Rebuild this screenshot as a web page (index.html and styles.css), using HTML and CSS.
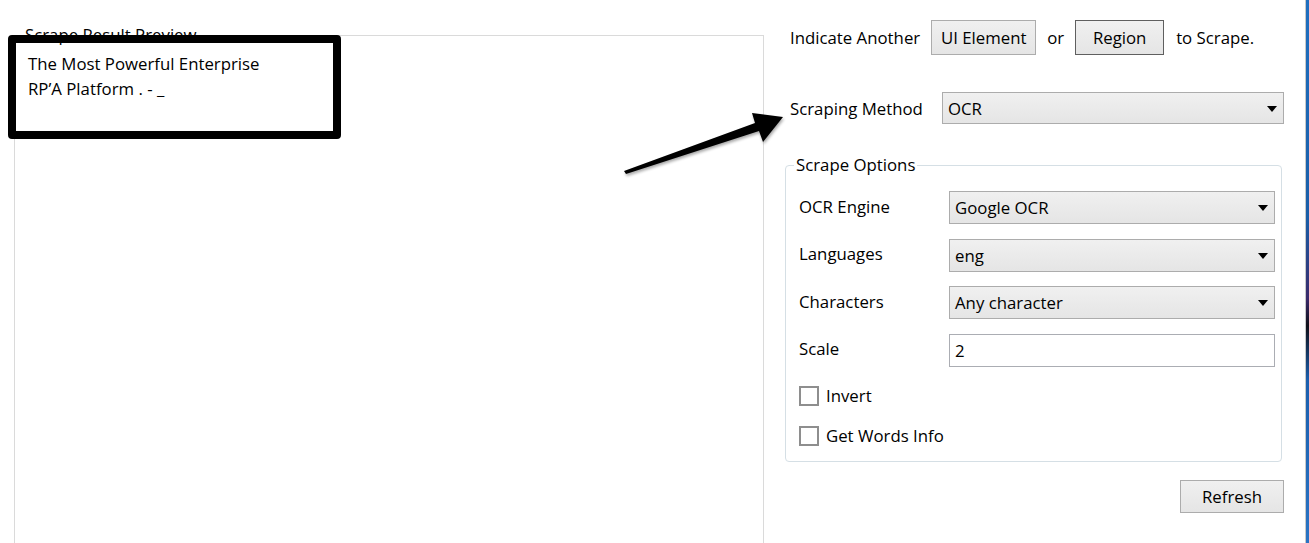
FILE: index.html
```html
<!DOCTYPE html>
<html lang="en">
<head>
<meta charset="utf-8">
<title>Scrape Wizard</title>
<link rel="stylesheet" href="styles.css">
</head>
<body>
<div class="window">
  <div class="left">
    <fieldset class="preview">
      <legend class="preview-legend">Scrape Result Preview</legend>
      <div class="preview-text">The Most Powerful Enterprise<br>RP’A Platform . - _</div>
    </fieldset>
  </div>
  <div class="right">
    <div class="indicate">
      <span class="txt">Indicate Another</span>
      <button class="btn btn-ui">UI Element</button>
      <span class="txt">or</span>
      <button class="btn btn-region">Region</button>
      <span class="txt">to Scrape.</span>
    </div>
    <div class="method-row">
      <span class="txt">Scraping Method</span>
      <div class="select select-method"><span>OCR</span><i class="caret"></i></div>
    </div>
    <fieldset class="options">
      <legend class="options-legend">Scrape Options</legend>
      <div class="opt-grid">
        <span class="lbl">OCR Engine</span>
        <div class="select"><span>Google OCR</span><i class="caret"></i></div>
        <span class="lbl">Languages</span>
        <div class="select"><span>eng</span><i class="caret"></i></div>
        <span class="lbl">Characters</span>
        <div class="select"><span>Any character</span><i class="caret"></i></div>
        <span class="lbl">Scale</span>
        <div class="input"><span>2</span></div>
      </div>
      <div class="checks">
        <label class="check"><span class="box"></span><span>Invert</span></label>
        <label class="check"><span class="box"></span><span>Get Words Info</span></label>
      </div>
    </fieldset>
    <div class="actions">
      <button class="btn btn-refresh">Refresh</button>
    </div>
  </div>
  <div class="edge"></div>

  <div class="highlight"></div>
  <svg class="arrow" viewBox="0 0 1309 543" width="1309" height="543" aria-hidden="true">
    <defs>
      <filter id="sh" x="-10%" y="-10%" width="120%" height="120%">
        <feGaussianBlur in="SourceAlpha" stdDeviation="1.5"/>
        <feOffset dx="1" dy="2" result="o"/>
        <feComponentTransfer><feFuncA type="linear" slope="0.35"/></feComponentTransfer>
        <feMerge><feMergeNode/><feMergeNode in="SourceGraphic"/></feMerge>
      </filter>
    </defs>
    <polygon filter="url(#sh)" fill="#000" points="624,171 755,123 752,113 783,117 763,142 759,131 626,174"/>
  </svg>
</div>
</body>
</html>
```
FILE: styles.css
```css
html, body {
  margin: 0;
  padding: 0;
  background: #ffffff;
}

.window {
  position: relative;
  width: 1309px;
  height: 543px;
  overflow: hidden;
  display: flex;
  background: #ffffff;
  font-family: "Open Sans", "Noto Sans", sans-serif;
  font-size: 16.8px;
  color: #000;
}

/* ---------- left: preview ---------- */
.left {
  width: 785px;
  flex: none;
}

.preview {
  box-sizing: border-box;
  margin: 25px 0 0 14px;
  width: 750px;
  height: 600px;
  padding: 6px 0 0 13px;
  border: 1px solid #dadada;
  border-bottom: none;
  min-width: 0;
}

.preview-legend {
  margin-left: -5px;
  padding: 0 2px;
  line-height: 20px;
}

.preview-text {
  line-height: 25px;
}

/* ---------- right: form ---------- */
.right {
  width: 500px;
  flex: none;
  display: flex;
  flex-direction: column;
}

.indicate {
  margin-top: 20px;
  padding-left: 5px;
  height: 35px;
  display: flex;
  align-items: center;
  gap: 11px;
}

.txt {
  white-space: nowrap;
}

.btn {
  box-sizing: border-box;
  height: 35px;
  margin: 0;
  padding: 0;
  font: inherit;
  color: #000;
  background: linear-gradient(#f0f0f0, #e5e5e5);
  border: 1px solid #acacac;
  border-radius: 0;
}

.btn-ui { width: 105px; }

.btn-region {
  width: 89px;
  margin-right: 1px;
  border-color: #5f5f5f;
}

.method-row {
  margin-top: 37px;
  padding-left: 5px;
  display: grid;
  grid-template-columns: 152px 342px;
  align-items: center;
}

.select {
  box-sizing: border-box;
  height: 33px;
  display: flex;
  align-items: center;
  justify-content: space-between;
  padding: 0 6px 0 5px;
  background: linear-gradient(#f0f0f0, #e5e5e5);
  border: 1px solid #acacac;
}

.select-method { height: 32px; }

.caret {
  width: 0;
  height: 0;
  border-left: 5px solid transparent;
  border-right: 5px solid transparent;
  border-top: 6px solid #000;
  margin-top: 1px;
}

.input {
  box-sizing: border-box;
  height: 33px;
  display: flex;
  align-items: center;
  padding: 0 5px;
  background: #fff;
  border: 1px solid #abadb3;
}

/* ---------- options group ---------- */
.options {
  box-sizing: border-box;
  margin: 31px 0 0 0;
  width: 497px;
  padding: 16px 6px 15px 13px;
  border: 1px solid #d5dfe5;
  border-radius: 4px;
  min-width: 0;
}

.options-legend {
  margin-left: -5px;
  padding: 0 2px;
  line-height: 20px;
}

.opt-grid {
  display: grid;
  grid-template-columns: 150px 326px;
  grid-auto-rows: 33px;
  row-gap: 14.5px;
  align-items: center;
}

.lbl {
  margin-top: -3px;
}

.checks {
  margin-top: 19px;
  display: flex;
  flex-direction: column;
  gap: 20px;
}

.check {
  display: flex;
  align-items: center;
  gap: 7px;
  height: 20px;
}

.box {
  box-sizing: border-box;
  width: 20px;
  height: 20px;
  background: #fff;
  border: 2px solid #8e8e8e;
}

.actions {
  margin-top: 18px;
  display: flex;
  justify-content: flex-end;
  padding-right: 1px;
}

.btn-refresh {
  width: 104px;
  height: 33px;
}

/* ---------- window edge ---------- */
.edge {
  margin-left: auto;
  width: 4px;
  flex: none;
  box-sizing: border-box;
  border-left: 1px solid #c9c9c9;
  background: linear-gradient(#1f6fc0 0%, #1a5ea8 40%, #3a2a6a 55%, #101018 60%, #1b5fae 70%, #2a74c4 100%);
}

/* ---------- annotations ---------- */
.highlight {
  position: absolute;
  left: 8px;
  top: 35px;
  width: 333px;
  height: 104px;
  box-sizing: border-box;
  border: 8px solid #000;
  border-radius: 4px;
}

.arrow {
  position: absolute;
  left: 0;
  top: 0;
  pointer-events: none;
}
```
